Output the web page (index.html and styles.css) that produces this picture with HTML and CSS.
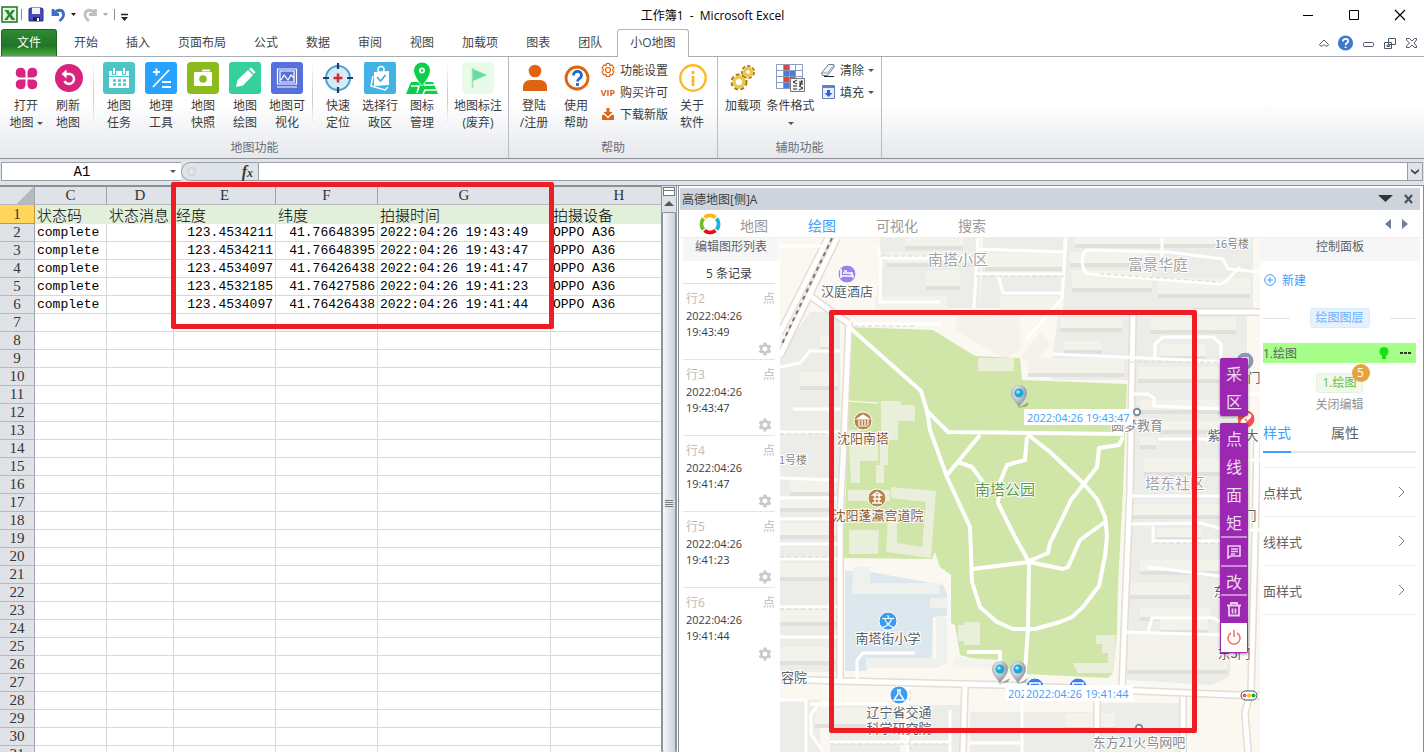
FILE: index.html
```html
<!DOCTYPE html>
<html lang="zh-CN">
<head>
    <meta charset="UTF-8">
    <meta name="viewport" content="width=device-width, initial-scale=1.0">
    <title>工作簿1 - Microsoft Excel</title>
    <link rel="stylesheet" href="styles.css">
</head>
<body>
    <header class="titlebar">
        <div class="quick">
            <svg width="130" height="18" viewBox="0 0 130 18">
                <rect x="1" y="1" width="15" height="15" fill="#e8f4e4" stroke="#2c7a32" stroke-width="1.6"/>
                <path d="M3.500 4h4l1.500 3 2-3h3l-3.500 5 4 5h-4l-2-3.500-2 3.500h-3.500l4-5z" fill="#2a8a32"/>
                <path d="M20.500 3v11M113.500 3v11" stroke="#8a8a8a"/>
                <path d="M29 2h12l1 1v12H28V3z" fill="#4a4fb8" stroke="#2b2f88"/>
                <path d="M31 2h8v6h-8z" fill="#f2f4fc"/><path d="M32 11h7v4h-7z" fill="#20215a"/><path d="M36 12h2v3h-2z" fill="#fff"/>
                <path d="M52 3v5.500h6M53 8c3-5 9-5 9.500 0 .3 3-1.500 5-4 7" fill="none" stroke="#3a6fc8" stroke-width="2.800"/>
                <path d="M70 7h5l-2.500 3zM120 11h7l-3.500 4z" fill="#222"/>
                <path d="M94.500 3v5.500H88M94 8c-3-5-9-5-10 0-.3 3 1.500 5 4 7" fill="none" stroke="#c0c0c0" stroke-width="2.800"/>
                <path d="M102 7h5l-2.500 3z" fill="#aaa"/><path d="M120 8.500h7" stroke="#222" stroke-width="1.500"/>
            </svg>
        </div>
        <h1>工作簿1 &nbsp;-&nbsp; Microsoft Excel</h1>
        <div class="window-buttons">
            <button aria-label="最小化"><svg width="12" height="12"><path d="M1 6.500h10" stroke="#000"/></svg></button>
            <button aria-label="最大化"><svg width="12" height="12"><path d="M1.500 1.500h9v9h-9z" fill="none" stroke="#000"/></svg></button>
            <button aria-label="关闭"><svg width="12" height="12"><path d="M1 1l10 10M11 1L1 11" stroke="#000" stroke-width="1.200"/></svg></button>
        </div>
    </header>

    <nav class="tabs">
        <button class="file-tab">文件</button>
        <a href="#">开始</a><a href="#">插入</a><a href="#">页面布局</a><a href="#">公式</a><a href="#">数据</a><a href="#">审阅</a><a href="#">视图</a><a href="#">加载项</a><a href="#">图表</a><a href="#">团队</a><a href="#" class="active">小O地图</a>
        <div class="tab-tools">
            <svg width="98" height="16" viewBox="0 0 98 16">
                <path d="M.5 9.500L5 5l4.500 4.500-1 1.500H6.500L5 9.500 3.500 11h-2z" fill="#fff" stroke="#4c5665"/>
                <circle cx="26.500" cy="8" r="7.600" fill="#3f78cc"/><path d="M24 6.500c0-3.500 5.200-3.500 5.200-.5 0 2-2.600 2-2.600 4M26.600 11.500v1.500" stroke="#fff" stroke-width="1.800" fill="none"/>
                <rect x="44.500" y="7.500" width="10" height="4" rx="1" fill="#fff" stroke="#4c5665"/>
                <path d="M69.500 3.500h7v6h-7zM65.500 7.500h7v6h-7zM68 10h2.500v1.500H68z" fill="#fff" stroke="#4c5665"/>
                <path d="M87.500 3.500h3l2.500 2.500 2.500-2.500h2V5L95 8l2.500 3v1.500h-2L93 10l-2.500 2.500h-3V11L90.500 8l-3-3z" fill="#fff" stroke="#4c5665"/>
            </svg>
        </div>
    </nav>

    <section class="ribbon">
        <div class="group">
            <div class="tools">
                <button class="tool"><svg width="32" height="32" viewBox="0 0 32 32" fill="#d6247f"><path d="M15.500 15.500H10A4.900 4.900 0 1 1 15.500 10zM17.500 15.500H23A4.900 4.900 0 1 0 17.500 10zM15.500 17.500H10A4.900 4.900 0 1 0 15.500 23zM17.500 17.500H23A4.900 4.900 0 1 1 17.500 23z"/></svg><span>打开<br>地图 <i class="caret"></i></span></button>
                <button class="tool"><svg width="32" height="32" viewBox="0 0 32 32"><circle cx="17" cy="16" r="14" fill="#d6247f"/><path d="M12 12h6a5 5 0 1 1-5.500 7" fill="none" stroke="#fff" stroke-width="2.500"/><path d="M9.500 12l5-4.500v9z" fill="#fff"/></svg><span>刷新<br>地图</span></button>
                <i class="sep"></i>
                <button class="tool"><svg width="32" height="32" viewBox="0 0 32 32"><rect width="32" height="32" rx="3" fill="#4ec5c5"/><path d="M6 9h3v4h4V9h6v4h4V9h3v5H6zM6 15h20v11H6z" fill="#fff"/><path d="M11 6v6M21 6v6" stroke="#fff" stroke-width="2"/><path d="M10 18.500h3M15 18.500h3M20 18.500h3M10 22.500h3M15 22.500h3M20 22.500h3" stroke="#4ec5c5" stroke-width="2.500"/></svg><span>地图<br>任务</span></button>
                <button class="tool"><svg width="32" height="32" viewBox="0 0 32 32"><rect width="32" height="32" rx="3" fill="#27a2ff"/><path d="M8 10h7M11.500 6.500v7M24 8L8 25M17 20h9M17 25h9" stroke="#fff" stroke-width="1.800"/></svg><span>地理<br>工具</span></button>
                <button class="tool"><svg width="32" height="32" viewBox="0 0 32 32"><rect width="32" height="32" rx="4" fill="#8bbb1c"/><rect x="7" y="10" width="18" height="14" rx="1" fill="#fff"/><path d="M15 8.500h8" stroke="#fff" stroke-width="1.800"/><circle cx="16" cy="17" r="3.800" fill="#8bbb1c"/></svg><span>地图<br>快照</span></button>
                <button class="tool"><svg width="32" height="32" viewBox="0 0 32 32"><rect width="32" height="32" rx="3" fill="#36d09e"/><path d="M7 25l1.500-7L19 8l5 5-10 10.500zM20 7l2-1.500 4.500 4.500-1.500 2z" fill="#fff"/></svg><span>地图<br>绘图</span></button>
                <button class="tool"><svg width="32" height="32" viewBox="0 0 32 32"><rect width="32" height="32" rx="3" fill="#5671dc"/><path d="M6.500 7h19v15h-19zM9 9h14v11H9zM6 25h20M10 18l3-5 4 5 3-5 3 3" fill="none" stroke="#fff" stroke-width="1.200"/></svg><span>地图可<br>视化</span></button>
                <i class="sep"></i>
                <button class="tool"><svg width="32" height="32" viewBox="0 0 32 32"><circle cx="16" cy="16" r="12" fill="#d5ebf8" stroke="#4ba3d4" stroke-width="2"/><path d="M16 1v6M16 25v6M1 16h6M25 16h6" stroke="#243c66" stroke-width="2.200"/><path d="M16 11.500v9M11.500 16h9" stroke="#d42930" stroke-width="2.500"/></svg><span>快速<br>定位</span></button>
                <button class="tool"><svg width="32" height="32" viewBox="0 0 32 32"><rect width="32" height="32" rx="2" fill="#43b3e6"/><path d="M10 10l15-1v14l-15 1z" fill="#fff"/><path d="M9 14L7 24l14 4 3-3" fill="none" stroke="#fff" stroke-width="1.500"/><circle cx="17" cy="7.500" r="3" fill="none" stroke="#fff" stroke-width="1.500"/><path d="M13 15l3.500 4 5-6" fill="none" stroke="#43b3e6" stroke-width="1.800"/></svg><span>选择行<br>政区</span></button>
                <button class="tool"><svg width="32" height="32" viewBox="0 0 32 32" fill="#0bce49"><path d="M5 20h22l5 12H0z"/><path d="M5 24h8l-2 7M17 32l2-4h11M18 23h10" fill="none" stroke="#fff" stroke-width="1.500"/><path d="M16 0a8.500 8.500 0 0 1 8.500 8.500C24.500 15 16 24 16 24S7.500 15 7.500 8.500A8.500 8.500 0 0 1 16 0z" stroke="#fff"/><circle cx="16" cy="8.500" r="3" fill="#fff"/><circle cx="16" cy="8.500" r="1.200"/></svg><span>图标<br>管理</span></button>
                <i class="sep"></i>
                <button class="tool wide"><svg width="32" height="32" viewBox="0 0 32 32"><rect width="32" height="32" rx="5" fill="#e8fbe9"/><path d="M10.500 6v20" stroke="#9bdfb8" stroke-width="1.500"/><path d="M11 7l14 6-14 6z" fill="#68dba0"/></svg><span>地图标注<br>(废弃)</span></button>
            </div>
            <div class="group-name">地图功能</div>
        </div>
        <div class="group">
            <div class="tools">
                <button class="tool"><svg width="32" height="32" viewBox="0 0 32 32" fill="#e0640f"><circle cx="17" cy="9" r="6.300"/><path d="M5 29v-4c0-4 3-7 7-7h10c4 0 7 3 7 7v4z"/></svg><span>登陆<br>/注册</span></button>
                <button class="tool"><svg width="32" height="32" viewBox="0 0 32 32" fill="none"><circle cx="17" cy="16" r="11" stroke="#e0640f" stroke-width="2.800"/><path d="M13.500 13.500c0-5.500 8-5.500 8 0 0 3-4 3-4 6M17.500 21v3" stroke="#2366cc" stroke-width="2.800"/></svg><span>使用<br>帮助</span></button>
                <div class="small-tools">
                    <button><svg width="16" height="16" viewBox="0 0 16 16" fill="none" stroke="#e0640f" stroke-width="1.200"><path d="M6.500 1.500h3l.5 2 2-.5 2 3-1.500 2L14 10l-2 3-2-.5-.5 2h-3l-.5-2-2 .5-2-3 1.500-2L2 6l2-3 2 .5z"/><circle cx="8" cy="8" r="2.500"/></svg>功能设置</button>
                    <button><b class="vip">VIP</b>购买许可</button>
                    <button><svg width="16" height="16" viewBox="0 0 16 16" fill="#e0640f"><path d="M6.500 2h3v4h3L8 10.500 3.500 6h3z"/><path d="M2 9h2.500L8 12.500 11.500 9H14v5H2z"/></svg>下载新版</button>
                </div>
                <button class="tool"><svg width="32" height="32" viewBox="0 0 32 32" fill="none" stroke="#fbb829"><circle cx="17" cy="16" r="12.700" stroke-width="2.400"/><path d="M17 14v10M17 9v3" stroke-width="2.800"/></svg><span>关于<br>软件</span></button>
            </div>
            <div class="group-name">帮助</div>
        </div>
        <div class="group">
            <div class="tools">
                <button class="tool"><svg width="32" height="32" viewBox="0 0 32 32" fill="none"><g stroke="#a07a14" stroke-width="5"><circle cx="21" cy="10" r="4.500" stroke-dasharray="2.500 1.500"/><circle cx="12" cy="20" r="6" stroke-dasharray="3 2"/></g><g stroke="#edc84e" stroke-width="3.500"><circle cx="21" cy="10" r="3.800"/><circle cx="12" cy="20" r="5"/></g></svg><span>加载项</span></button>
                <button class="tool format"><svg width="32" height="32" viewBox="0 0 32 32"><path d="M1 2h27v24H1z" fill="#fff"/><path d="M8 2h6v6H8zM8 14h12v6H8z" fill="#e5452f"/><path d="M8 8h12v6H8zM8 20h6v6H8z" fill="#4a7ce0"/><path d="M1.500 2.500h26v24h-26zM1 8.500h27M1 14.500h27M1 20.500h27M8.500 2v24M14.500 2v24M20.500 2v24" fill="none" stroke="#8a9cc5"/><path d="M15.500 16.500h14v13h-14z" fill="#f4f6fb" stroke="#777"/><path d="M22 18l-4 2 4 2M18 24h4M18 27h4M24 20h4M24 22h4M27 18l-2 6M24 24l4 2-4 2" fill="none" stroke="#222"/></svg><span>条件格式<br><i class="caret"></i></span></button>
                <div class="small-tools">
                    <button><svg width="16" height="16" viewBox="0 0 16 16"><path d="M1.500 11l7-8.500h5l1 2-7 9h-5z" fill="#f6f8fc" stroke="#68789a"/><path d="M2 11h5.500l6.500-8" fill="none" stroke="#8294bc"/><path d="M4 14.500h10" stroke="#222"/></svg>清除 <i class="caret"></i></button>
                    <button><svg width="16" height="16" viewBox="0 0 16 16"><path d="M2.500 1.500h12v13h-12z" fill="#e6eefb" stroke="#6681b8"/><path d="M2 2h13v2H2z" fill="#5b86cf"/><path d="M7 6h3v3h2.500l-4 4-4-4H7z" fill="#2c62d0"/></svg>填充 <i class="caret"></i></button>
                </div>
            </div>
            <div class="group-name">辅助功能</div>
        </div>
    </section>

    <div class="formula-bar">
        <div class="name-box"><input aria-label="名称框" value="A1"><i class="caret"></i></div>
        <div class="fx"><span class="knob"></span><em>f<small>x</small></em></div>
        <input class="formula" aria-label="编辑栏">
        <button class="expand" aria-label="展开"><svg width="8" height="7"><path d="M0 1l4 3 4-3v2L4 6.500 0 3z" fill="#444"/></svg></button>
    </div>

    <main class="workspace">
        <div class="sheet">
            <table>
                <colgroup><col class="w-num"><col class="w-c"><col class="w-d"><col class="w-e"><col class="w-f"><col class="w-g"><col class="w-h"></colgroup>
                <thead><tr><th class="corner"></th><th>C</th><th>D</th><th>E</th><th>F</th><th>G</th><th>H</th></tr></thead>
                <tbody id="rows"></tbody>
            </table>
        </div>
        <div class="scrollbar">
            <div class="split"></div>
            <div class="up"></div>
            <div class="thumb"><i></i></div>
        </div>
        <div class="marker marker-sheet"></div>

        <aside class="pane">
            <div class="pane-title"><span>高德地图[侧]A</span>
                <svg width="36" height="12"><path d="M0 2h15L7.500 9z" fill="#333"/><path d="M27 2l7 8M34 2l-7 8" stroke="#4c5258" stroke-width="2.200"/></svg>
            </div>
            <div class="pane-tabs">
                <svg width="22" height="22" viewBox="0 0 22 22" fill="none" stroke-width="4"><path d="M5.500 4.500a8.500 8.500 0 0 1 11 0" stroke="#fdb813"/><path d="M17.500 5.500a8.500 8.500 0 0 1 0 11" stroke="#19b5dc"/><path d="M16.500 17.500a8.500 8.500 0 0 1-11 0" stroke="#e60f1e"/><path d="M4.500 16.500a8.500 8.500 0 0 1 0-11" stroke="#72c02c"/></svg>
                <a href="#">地图</a><a href="#" class="active">绘图</a><a href="#">可视化</a><a href="#">搜索</a>
                <svg class="arrows" width="24" height="12"><path d="M7 1v10L1 6zM18 1v10l6-5z" fill="#6f7f99"/></svg>
            </div>
            <div class="pane-body">
                <div class="records">
                    <h2>编辑图形列表</h2>
                    <p class="count">5 条记录</p>
                    <ul id="records"></ul>
                </div>

                <div class="map">
                    <svg class="map-canvas" viewBox="780 238 480 514" preserveAspectRatio="xMidYMid slice">
                        <path d="M780 238h480v514H780z" fill="#fbf8f1"/>
                        <!-- residential blocks -->
                        <g fill="#ecece8">
                            <path d="M880 238h100v70H880l-3-20 5-10-2-25zM983 238h80v55l-8 15h-75zM1067 238h186v73h-190zM810 312h30l2 360h-62V355zM1058 316h72v64h-78v-20zM1137 316h110v120h-15l-2 240-18 9-85-5zM780 700h40v52h-40zM830 705h70v47h-70zM910 705h50v47h-50zM970 712h125v40H970zM1100 703h80v49h-80z"/>
                        </g>
                        <!-- buildings -->
                        <g class="buildings" fill="#f3f3ec">
                            <path d="M887 252h88v11h-88zM905 238h58v8h-58zM926 270h34v16h-34zM875 296h72v14h-72zM985 253h78v14h-78zM1000 296h58v14h-58zM1070 252h80v11h-80zM1072 270h80v18h-80zM1158 278h92v16h-92zM1075 238h160v6h-160zM1060 318h62v10h-62zM1064 341h38v9h-38zM1028 358h96v15h-96zM1151 318h85v12h-85zM1160 344h46v12h-46zM1138 367h90v12h-90zM1140 400h80v10h-80zM1140 437h16v8h-16zM1160 421h60v9h-60zM1144 458h76v14h-76zM1132 504h90v11h-90zM1157 528h44v9h-44zM1140 560h85v11h-85zM1130 583h60v12h-60zM1140 608h70v9h-70zM1160 619h48v11h-48zM1127 634h100v36h-100zM790 480h46v12h-46zM800 372h38v14h-38zM820 335h14v12h-14zM780 496h57v12h-57zM780 523h57v12h-57zM780 563h57v14h-57zM780 610h57v12h-57zM780 647h57v14h-57zM815 708h70v16h-70zM1065 713h50v14h-50zM1110 742h65v10h-65z"/>
                        </g>
                        <path d="M956 317l63-3 2 35-16 10-48-28zM1040 332l10 12-16 20-14-7z" fill="#f5f2eb"/>
                        <!-- park -->
                        <path d="M849 327l84 3 42 26 45 2 2 22 105 4-4 106-5 97-1 46-4 40-5 5-81-4-67-19-5-30-4-2v-48l-11-8-5-15-3 7-90-1 4-68 2-93z" fill="#cfe6a8"/>
                        <g fill="#e9efda">
                            <path d="M978 358h36v13h-36zM881 401h20v4h14v16h-17v19h-17zM859 443h19v18h-19zM848 430h12v53h-9zM880 443h8v22h-8zM876 465h8v18h-8zM849 530h30l-1 24h-29zM891 487l45 4-5 67-45-6 2-35h9v26l25 4 4-45-35-4zM848 490h42v11h-42zM958 625h6v16h-6zM964 622h16v23h-16zM1096 635h20l-3 38h-35l-5-10h35v-10h-6v-9h-6z"/>
                        </g>
                        <!-- school -->
                        <path d="M845 571h20l78 14 4 8v23l-14 1-1 43h-65v11h-22z" fill="#dce8ee"/>
                        <path d="M853 567h17v16h70v11h-88zM930 598h18v10h-18zM866 658h73v10h-73zM936 617h11v48h-11z" fill="#eff1ed"/>
                        <path d="M955 657l45 3v9l-47-2z" fill="#f4f3ed"/>
                        <!-- streets: casing, surface -->
                        <g class="casing"><path d="M849 322l-6 140-2 35-1 30v155M780 679l60 2 162 4 90 4 168 7M1133 315l-3 175-8 199M1190 312h70M1257 440l-2 100-4 150-6 23 3 39M965 687l-2 65M1183 697v55M1097 692v60M828 238l-48 95M837 238l-57 118M810 296l38 27"/></g>
                        <g class="street"><path d="M849 322l-6 140-2 35-1 30v155M780 679l60 2 162 4 90 4 168 7M1133 315l-3 175-8 199M1190 312h70M1257 440l-2 100-4 150-6 23 3 39M965 687l-2 65M1183 697v55M1097 692v60M828 238l-48 95M837 238l-57 118M810 296l38 27"/></g>
                        <path d="M832 238l-51 108" class="rail"/>
                        <g class="lane"><path d="M780 246h42M877 246l4 12-1 44h60M880 258h98M978 238l-4 70M978 249l86 3M976 274h88M998 275l5 18h60M1066 238l-4 60-36 42M1240 267l-15 15-5 2-130-10c-10 0-10-24-2-24l80 2 55 7 5 10 32 3M1162 238v20M854 324h88M780 367l20-4 10-12h30M793 409h47M780 432h60M780 478l57 2M780 498h57M780 519h57M780 544h57M780 559h57M780 607h57M780 637h57M1053 354l180 8M1155 358v-14l8-7h50l8 7v15M1134 394h14l6 4v8l70 3M1158 439h70M1130 496h100M1130 524l70-1 30 8M1153 526v15h70M1148 567l80 10M1122 632l108 3M1148 632l4-14h62l9 6M780 700h26v52M820 702l-9 12v20l10 15M810 704h80M830 742h120M908 687v65M950 710v42M1022 695v57M970 743h50M857 680v-20l6-7h52M1239 460h21M1240 394h20M1240 530h20"/></g>
                        <g class="dash"><path d="M880 256h98M780 434h60M976 276h88M1100 274l120 8M854 326h60M780 557h57M780 609h57M830 744h120M1130 362h100M1155 543h70M910 690v62"/></g>
                        <!-- park footpaths -->
                        <g class="footpath"><path d="M849 327l72 64 6 20 3 19 17 47 23 50 2 55 8 25 17 15 16 7h22l25-7 12-5 11-10 16-21 6-30 2-20-2-19-8-18-14-16-33-31-23-18M927 411l21 21 176 2M980 435l-33 40M958 462l14 5 11 15M1027 437l-2 23-18 5-7 17-2 21 17 34 14 25M1123 437l-4 8-20 3-2 19-14 18-12 15-11 23-10 20-2 10-19 8M1105 522l-25 18-12 27-5 2-34-7-56 7M1029 562l-1 68-3 40-2 12M967 652h33v25"/></g>
                        <path d="M848 401l30 2" stroke="#fff"/>

                        <!-- place markers -->
                        <g class="poi">
                            <circle cx="847" cy="274" r="9" fill="#9c83ea"/><path d="M841 269v9M841 276h12v2M843 273h9v3M844 271h3" stroke="#fff" stroke-width="1.600" fill="none"/>
                            <circle cx="863" cy="421" r="9" fill="#b9854e"/><path d="M857 419l6-4 6 4zM858 426h10M859 420v5M862 420v5M865 420v5M868 420v5" fill="#fff" stroke="#fff" stroke-width="1.200"/>
                            <circle cx="877" cy="498" r="9" fill="#b9854e"/><path d="M873 495l4-3 4 3zM872 503h10M873 499h8M875 495v8M879 495v8" fill="none" stroke="#fff" stroke-width="1.400"/>
                            <circle cx="888" cy="621" r="9" fill="#3c9cf0"/>
                            <circle cx="899" cy="695" r="9" fill="#3c9cf0"/><path d="M897 690h4M898 690v4l-4 6h10l-4-6v-4" fill="none" stroke="#fff" stroke-width="1.400"/>
                            <circle cx="1245" cy="361" r="9" fill="#8e9bb3"/><path d="M1242 358h6v6h-6z" fill="none" stroke="#fff" stroke-width="1.500"/>
                            <circle cx="1246" cy="419" r="9" fill="#f15151"/><path d="M1243 422l6-6" stroke="#fff" stroke-width="5" stroke-linecap="round"/><path d="M1245 419l2 2" stroke="#f15151" stroke-width="1.500"/>
                            <circle cx="1035" cy="687" r="9" fill="#3a7ee8"/><circle cx="1078" cy="687" r="9" fill="#3a7ee8"/><path d="M1030 683h10v6h-10zM1073 683h10v6h-10z" fill="none" stroke="#fff" stroke-width="1.600"/>
                        </g>
                        <circle cx="1137" cy="412" r="3.200" fill="#fff" stroke="#7c8f98" stroke-width="2"/>
                        <circle cx="1139" cy="728" r="3.200" fill="#fff" stroke="#7c8f98" stroke-width="2"/>
                        <rect x="1241" y="691" width="16" height="9" rx="4.500" fill="#fff" stroke="#345c4a"/><circle cx="1244.500" cy="695.500" r="2" fill="#f15a6e"/><circle cx="1249" cy="695.500" r="2" fill="#fdbb20"/><circle cx="1253.500" cy="695.500" r="2" fill="#12ac45"/>

                        <g class="labels">
                            <text x="888" y="626" class="glyph">文</text>
                            <text x="847" y="296">汉庭酒店</text>
                            <text x="958" y="265" class="area">南塔小区</text>
                            <text x="1158" y="270" class="area">富景华庭</text>
                            <text x="1232" y="248" class="minor">16号楼</text>
                            <text x="863" y="443" class="temple">沈阳南塔</text>
                            <text x="878" y="520" class="temple">沈阳蓬瀛宫道院</text>
                            <text x="1005" y="495" class="park">南塔公园</text>
                            <text x="793" y="464" class="minor">1号楼</text>
                            <text x="794" y="682">容院</text>
                            <text x="888" y="643">南塔街小学</text>
                            <text x="899" y="717">辽宁省交通</text>
                            <text x="899" y="733">科学研究院</text>
                            <text x="1137" y="430" class="minor large">圆梦教育</text>
                            <text x="1175" y="489" class="area">塔东社区</text>
                            <text x="1139" y="747" class="minor large">东方21火鸟网吧</text>
                            <text x="1214" y="440">紫</text><text x="1252" y="440">大</text>
                            <text x="1254" y="382">门</text><text x="1250" y="520">门</text>
                            <text x="1220" y="596">东</text><text x="1234" y="658">东3门</text>
                        </g>

                        <defs>
                            <radialGradient id="pinBody" cx="40%" cy="30%"><stop offset="0" stop-color="#fff"/><stop offset="1" stop-color="#9da4a9"/></radialGradient>
                            <g id="pin">
                                <path d="M0 0l10-6-2 4z" fill="#555" opacity=".5"/>
                                <path d="M0 1c-1-6-8-9-8-16a8 8 0 0 1 16 0c0 7-7 10-8 16z" fill="url(#pinBody)"/>
                                <circle cy="-15" r="4.500" fill="#1ca5d8"/><circle cx="-1" cy="-16" r="1.800" fill="#9ce8fc"/>
                            </g>
                        </defs>
                        <use href="#pin" x="1019" y="408"/><use href="#pin" x="1000" y="684"/><use href="#pin" x="1018" y="684"/>
                        <g class="times">
                            <rect x="1024" y="409" width="109" height="16"/><text x="1027" y="422">2022:04:26 19:43:47</text>
                            <rect x="1005" y="685" width="108" height="16"/><text x="1008" y="698">2022:04:26 19:41:47</text>
                            <rect x="1024" y="685" width="109" height="16"/><text x="1026" y="698">2022:04:26 19:41:44</text>
                        </g>
                    </svg>
                    <div class="marker marker-map"></div>
                    <div class="draw-tools">
                        <div class="tool-set"><button>采</button><button>区</button></div>
                        <div class="tool-set">
                            <button>点</button><button>线</button><button>面</button><button>矩</button>
                            <button class="ruled" aria-label="标注"><svg width="14" height="14" fill="none" stroke="#ead0ee" stroke-width="1.600"><path d="M1 1h12v10H4l-3 2zM4 4h7M4 6.500h7M4 9h4"/></svg></button>
                            <button class="ruled">改</button>
                            <button class="ruled" aria-label="删除"><svg width="14" height="15" fill="none" stroke="#ead0ee" stroke-width="1.800"><path d="M0 3.500h14M4 3V1h6v2M2 4v9.500h10V4M5.500 6.500v5M8.500 6.500v5"/></svg></button>
                            <button class="ruled power" aria-label="关闭"><svg width="14" height="15" fill="none" stroke="#f56c6c" stroke-width="1.500"><path d="M4 3a6 6 0 1 0 6 0M7 0v7"/></svg></button>
                        </div>
                    </div>
                </div>

                <div class="control">
                    <h2>控制面板</h2>
                    <div class="control-body">
                        <button class="new"><svg width="12" height="12" fill="none" stroke="#409eff"><circle cx="6" cy="6" r="5.300"/><path d="M3 6h6M6 3v6"/></svg>新建</button>
                        <div class="divider"><span class="tag">绘图图层</span></div>
                        <div class="layer"><span>1.绘图</span>
                            <svg width="32" height="14"><circle cx="5" cy="5.500" r="4.500" fill="#15e215"/><path d="M3 9h4v4H3z" fill="#15e215"/><path d="M21 7h3M25 7h3M29 7h3" stroke="#333" stroke-width="2"/></svg>
                        </div>
                        <div class="current"><span class="tag green">1.绘图<b class="badge">5</b></span></div>
                        <button class="close-edit">关闭编辑</button>
                        <div class="style-tabs"><a href="#" class="active">样式</a><a href="#">属性</a></div>
                        <div class="collapse">
                            <button>点样式<svg width="8" height="12"><path d="M1 1l5 5-5 5"/></svg></button>
                            <button>线样式<svg width="8" height="12"><path d="M1 1l5 5-5 5"/></svg></button>
                            <button>面样式<svg width="8" height="12"><path d="M1 1l5 5-5 5"/></svg></button>
                        </div>
                    </div>
                </div>
            </div>
        </aside>
    </main>

    <script>
        const photos = [
            ['123.4534211', '41.76648395', '2022:04:26', '19:43:49'],
            ['123.4534211', '41.76648395', '2022:04:26', '19:43:47'],
            ['123.4534097', '41.76426438', '2022:04:26', '19:41:47'],
            ['123.4532185', '41.76427586', '2022:04:26', '19:41:23'],
            ['123.4534097', '41.76426438', '2022:04:26', '19:41:44']
        ];
        const ROWS = 31;

        let rowsHtml = '<tr class="names"><th>1</th><td>状态码</td><td>状态消息</td><td>经度</td><td>纬度</td><td>拍摄时间</td><td>拍摄设备</td></tr>';
        for (let i = 2; i <= ROWS; i++) {
            const p = photos[i - 2];
            rowsHtml += `<tr><th>${i}</th>`;
            if (p) {
                rowsHtml += `<td>complete</td><td></td><td class="num">${p[0]}</td><td class="num">${p[1]}</td><td>${p[2]} ${p[3]}</td><td>OPPO A36</td>`;
            } else {
                rowsHtml += '<td></td>'.repeat(6);
            }
            rowsHtml += '</tr>';
        }
        document.getElementById('rows').innerHTML = rowsHtml;

        const gear = '<svg width="14" height="14" viewBox="0 0 14 14" fill="none" stroke="#c8c8c8"><circle cx="7" cy="7" r="3.700" stroke-width="2.500"/><path d="M7 .5v2M7 11.500v2M1.400 3.700l1.700 1M10.900 9.300l1.700 1M1.400 10.300l1.700-1M10.900 4.700l1.700-1" stroke-width="3"/></svg>';
        document.getElementById('records').innerHTML = photos.map((p, i) => `
            <li>
                <div class="record-head"><span>行${i + 2}</span><span>点</span></div>
                <div class="record-time">${p[2]}<br>${p[3]}</div>
                <button aria-label="设置">${gear}</button>
            </li>`).join('');
    </script>
</body>
</html>
```
FILE: styles.css
```css
* {
    margin: 0;
    padding: 0;
    box-sizing: border-box;
}

body {
    display: flex;
    flex-direction: column;
    height: 100vh;
    overflow: hidden;
    background: #fff;
    color: #3c3c3c;
    font-family: 'Open Sans', 'Noto Sans CJK SC', sans-serif;
    font-size: 12px;
}

button {
    border: none;
    background: none;
    color: inherit;
    font: inherit;
    cursor: pointer;
}

a {
    color: inherit;
    text-decoration: none;
}

svg {
    display: block;
    flex-shrink: 0;
}

h2 {
    font-size: 12px;
    font-weight: normal;
}

.caret {
    display: inline-block;
    border: 3px solid transparent;
    border-top-color: #555;
    border-bottom: none;
    vertical-align: middle;
}

/* Title bar */
.titlebar {
    display: grid;
    grid-template-columns: 1fr auto 1fr;
    align-items: center;
    height: 29px;
    padding-left: 1px;
}

.titlebar h1 {
    color: #000;
    font-size: 12px;
    font-weight: normal;
}

.window-buttons {
    display: flex;
    justify-content: flex-end;
    gap: 34px;
    padding-right: 18px;
}

/* Ribbon tabs */
.tabs {
    display: flex;
    height: 28px;
    padding-left: 1px;
    border-bottom: 1px solid #a9adb3;
    line-height: 27px;
    color: #444;
}

.tabs a {
    padding: 0 14px;
}

.file-tab {
    width: 56px;
    margin-right: 3px;
    border: 1px solid #1b6526;
    border-bottom: none;
    border-radius: 3px 3px 0 0;
    background: linear-gradient(#2f8b31, #1f7529 60%, #4cae3a);
    color: #fff;
    line-height: 26px;
}

.tabs .active {
    height: 28px;
    margin-left: 1px;
    padding: 0 12px;
    border: 1px solid #b0b4ba;
    border-bottom: none;
    border-radius: 3px 3px 0 0;
    background: #fff;
    line-height: 26px;
}

.tab-tools {
    display: flex;
    align-items: center;
    margin-left: auto;
    padding-right: 7px;
}

/* Ribbon */
.ribbon {
    display: flex;
    flex-shrink: 0;
    height: 102px;
    padding-left: 1px;
    border-bottom: 1px solid #8b9097;
    background: linear-gradient(#fff 45%, #e6e8ec);
}

.group {
    display: flex;
    flex-direction: column;
    justify-content: space-between;
    padding: 5px 4px 2px;
    border-right: 1px solid #b9bdc3;
}

.tools {
    display: flex;
}

.tool {
    display: flex;
    flex-direction: column;
    align-items: center;
    gap: 3px;
    width: 42px;
    line-height: 17px;
    white-space: nowrap;
}

.tool.wide {
    width: 52px;
}

.tool.format {
    width: 53px;
}

.sep {
    width: 1px;
    height: 68px;
    margin: 0 4px;
    background: linear-gradient(#fff, #c5c8cd, #fff);
}

.small-tools {
    display: flex;
    flex-direction: column;
    margin: -3px 3px 0;
}

.small-tools button {
    display: flex;
    align-items: center;
    gap: 4px;
    height: 22px;
    white-space: nowrap;
}

.vip {
    width: 16px;
    color: #e0640f;
    font-size: 9px;
}

.group-name {
    color: #6a6f78;
    line-height: 17px;
    text-align: center;
}

/* Formula bar */
.formula-bar {
    display: flex;
    flex-shrink: 0;
    height: 27px;
    padding: 3px 1px 4px;
    border-bottom: 1px solid #8b9097;
    background: #dfe3ea;
}

.formula-bar input {
    border: none;
    outline: none;
}

.name-box {
    display: flex;
    align-items: center;
    width: 180px;
    padding-right: 5px;
    border: 1px solid #9a9fa6;
    border-right: none;
    background: #fff;
}

.name-box input {
    flex: 1;
    min-width: 0;
    padding-right: 8px;
    font: 14px 'Liberation Mono', monospace;
    text-align: center;
}

.fx {
    display: flex;
    align-items: center;
    justify-content: space-between;
    width: 78px;
    padding: 0 5px;
    border: 1px solid #9a9fa6;
    border-radius: 10px 0 0 10px;
}

.knob {
    width: 9px;
    height: 9px;
    border-radius: 50%;
    background: radial-gradient(#f4f4f4, #b9bdc2);
}

.fx em {
    font: italic bold 16px 'Liberation Serif', serif;
}

.fx small {
    font-size: 12px;
}

.formula {
    flex: 1;
    min-width: 0;
    border-block: 1px solid #9a9fa6 !important;
}

.expand {
    display: flex;
    align-items: center;
    justify-content: center;
    width: 16px;
    border: 1px solid #9a9fa6;
}

/* Sheet */
.workspace {
    position: relative;
    display: grid;
    grid-template-columns: minmax(0, 1fr) 16px 747px;
    flex: 1;
    min-height: 0;
}

.sheet {
    overflow: hidden;
    padding-top: 1px;
    background: #8b9097;
}

table {
    width: 688px;
    border-collapse: separate;
    border-spacing: 0;
    table-layout: fixed;
    background: #fff;
}

.w-num { width: 35px; }
.w-c { width: 72px; }
.w-d { width: 67px; }
.w-e { width: 102px; }
.w-f { width: 102px; }
.w-g { width: 173px; }
.w-h { width: 137px; }

tr {
    height: 18px;
}

th {
    border-right: 1px solid #9fa5ad;
    border-bottom: 1px solid #b4b9c0;
    background: #dfe3e8;
    color: #333;
    font: 15px 'Liberation Serif', serif;
    line-height: 17px;
}

.corner {
    background: linear-gradient(135deg, #dfe3e8 65%, #b5bac1 65%);
}

td {
    height: 18px;
    padding: 0 2px;
    border-right: 1px solid #d6d8da;
    border-bottom: 1px solid #d6d8da;
    color: #000;
    font: 13px 'Liberation Mono', monospace;
    line-height: 17px;
    white-space: nowrap;
}

.num {
    text-align: right;
}

.names td {
    height: 19px;
    border-color: #e2efda;
    background: #e2efda;
    font: 15px 'Noto Sans CJK SC', sans-serif;
    font-weight: 300;
    line-height: 17px;
}

.names th {
    border-color: #c9952f;
    background: #ffd65a;
}

.scrollbar {
    display: flex;
    flex-direction: column;
    border-inline: 1px solid #8f959d;
    background: #dfe3e8;
}

.split {
    height: 9px;
    margin: 1px;
    border: 1px solid #777;
    background: linear-gradient(#fff 30%, #777 30%, #777 45%, #fff 45%);
}

.up {
    width: 0;
    margin: 4px auto 6px;
    border: 5px solid transparent;
    border-top: none;
    border-bottom-color: #555;
}

.thumb {
    display: flex;
    align-items: center;
    justify-content: center;
    flex: 1;
    border: 1px solid #8a929c;
    border-bottom: none;
    border-radius: 2px;
    background: linear-gradient(90deg, #f6f8fa, #cdd3dc);
}

.thumb i {
    width: 8px;
    height: 7px;
    margin-top: 42px;
    background: repeating-linear-gradient(#777 0 1px, #eee 1px 2px);
}

.marker {
    position: absolute;
    border: 5px solid #ee1c25;
    border-radius: 2px;
    pointer-events: none;
}

.marker-sheet {
    top: -4px;
    left: 171px;
    width: 383px;
    height: 147px;
}

.marker-map {
    top: 72px;
    left: 49px;
    width: 368px;
    height: 423px;
}

/* Map pane */
.pane {
    display: flex;
    flex-direction: column;
    min-height: 0;
    margin-left: 1px;
    padding: 2px 3px 0 1px;
    border: solid #858c96;
    border-width: 0 1px;
    background: #fff;
}

.pane-title {
    display: flex;
    align-items: center;
    justify-content: space-between;
    height: 22px;
    padding: 0 6px 0 2px;
    background: #cdd4dc;
}

.pane-tabs {
    display: flex;
    align-items: center;
    height: 28px;
    padding: 0 12px 0 19px;
    border-bottom: 1px solid #eee;
    color: #999;
    font-size: 14px;
}

.pane-tabs a {
    width: 28px;
    margin-left: 40px;
    padding-top: 2px;
    white-space: nowrap;
}

.pane-tabs a:first-of-type {
    margin-left: 19px;
}

.pane-tabs a:last-of-type {
    margin-left: 54px;
}

.pane-tabs .arrows {
    margin-left: auto;
}

.pane-tabs .active,
.style-tabs .active {
    color: #409eff;
}

.pane-body {
    display: grid;
    grid-template-columns: 100px minmax(0, 1fr) 160px;
    flex: 1;
    min-height: 0;
}

.pane-body h2 {
    height: 23px;
    background: #f6f6f6;
    color: #606266;
    line-height: 17px;
    text-align: center;
}

.records {
    overflow: hidden;
    padding: 0 1px 0 3px;
}

.count {
    height: 23px;
    margin-right: 4px;
    border-bottom: 1px solid #dcdfe6;
    line-height: 25px;
    text-align: center;
}

.records ul {
    list-style: none;
}

.records li {
    display: flex;
    flex-direction: column;
    height: 76px;
    margin-right: 4px;
    padding: 5px 0 3px 3px;
    border-bottom: 1px solid #e2e4e8;
}

.records li:last-child {
    border: none;
}

.records li button {
    margin: auto 3px 0 auto;
}

.record-head {
    display: flex;
    justify-content: space-between;
    color: #bbb;
    line-height: 19px;
}

.record-time {
    font-size: 11px;
    line-height: 16px;
}

.map {
    position: relative;
    overflow: hidden;
}

.map-canvas {
    width: 100%;
    height: 100%;
}

.buildings {
    filter: drop-shadow(0 4px 0 #e0e0dc);
}

.casing,
.street,
.lane,
.dash,
.footpath,
.rail {
    fill: none;
    stroke: #fff;
    stroke-linejoin: round;
}

.casing {
    stroke: #e3ddd2;
    stroke-width: 8px;
}

.street {
    stroke-width: 5px;
}

.lane {
    stroke-width: 3px;
}

.dash {
    stroke: #d9d6d0;
    stroke-dasharray: 4 3;
}

.footpath {
    stroke-width: 4px;
}

.rail {
    stroke: #777;
    stroke-width: 2px;
    stroke-dasharray: 4 4;
}

.poi circle {
    stroke: #fff;
}

.labels text {
    fill: #59616b;
    stroke: #fff;
    stroke-width: 2px;
    paint-order: stroke;
    font-family: 'Noto Sans CJK SC', sans-serif;
    font-size: 13px;
    text-anchor: middle;
}

.labels .area {
    fill: #a3a3a3;
    font-size: 15px;
}

.labels .minor {
    fill: #888;
    font-size: 11px;
}

.labels .large {
    font-size: 13px;
}

.labels .temple {
    fill: #8e5a34;
}

.labels .park {
    fill: #5b9a50;
    font-size: 15px;
}

.labels .glyph {
    fill: #fff;
    stroke: none;
}

.times rect {
    fill: #fff;
}

.times text {
    fill: #409eff;
    font-size: 11px;
}

.draw-tools {
    position: absolute;
    top: 120px;
    right: 12px;
    width: 28px;
}

.tool-set {
    margin-bottom: 7px;
    padding: 1px;
    border-radius: 2px;
    background: #9c27b0;
    box-shadow: 0 1px 3px rgba(0, 0, 0, 0.4);
}

.tool-set button {
    display: flex;
    align-items: center;
    justify-content: center;
    width: 100%;
    height: 28px;
    color: #f0dcf3;
    font-size: 16px;
}

.tool-set .ruled {
    height: 29px;
    border-top: 2px solid #c88dd3;
}

.tool-set .power {
    border: none;
    background: #fff;
}

/* Control panel */
.control {
    color: #606266;
}

.control-body {
    display: flex;
    flex-direction: column;
    padding: 10px 4px 0 3px;
}

.new {
    display: flex;
    align-items: center;
    gap: 6px;
    height: 18px;
    padding-left: 1px;
    color: #409eff;
}

.divider {
    display: flex;
    align-items: center;
    gap: 20px;
    margin: 19px 0 15px;
}

.divider::before,
.divider::after {
    content: '';
    flex: 1;
    border-top: 1px solid #dcdfe6;
}

.tag {
    position: relative;
    height: 20px;
    padding: 0 5px;
    border: 1px solid #d9ecff;
    border-radius: 3px;
    background: #e6f1fe;
    color: #66b1ff;
    line-height: 18px;
    white-space: nowrap;
}

.tag.green {
    display: inline-block;
    border-color: #e1f3d8;
    background: #f0f9eb;
    color: #67c23a;
}

.badge {
    position: absolute;
    top: -10px;
    right: -8px;
    width: 18px;
    height: 18px;
    border-radius: 50%;
    background: #e6a23c;
    color: #fff;
    font-weight: normal;
    text-align: center;
}

.layer {
    display: flex;
    align-items: center;
    justify-content: space-between;
    height: 20px;
    padding-right: 5px;
    background: #a5ff88;
}

.current {
    height: 20px;
    margin-top: 10px;
    text-align: center;
}

.close-edit {
    height: 22px;
    color: #909399;
}

.style-tabs {
    display: flex;
    gap: 40px;
    height: 38px;
    margin-bottom: 14px;
    border-bottom: 2px solid #e4e7ed;
    font-size: 14px;
    line-height: 36px;
}

.style-tabs .active {
    height: 38px;
    border-bottom: 2px solid #409eff;
}

.collapse {
    border-top: 1px solid #ebeef5;
}

.collapse button {
    display: flex;
    align-items: center;
    justify-content: space-between;
    width: 100%;
    height: 49px;
    padding-right: 10px;
    border-bottom: 1px solid #ebeef5;
    font-size: 13px;
}

.collapse svg {
    fill: none;
    stroke: #777;
}
```
